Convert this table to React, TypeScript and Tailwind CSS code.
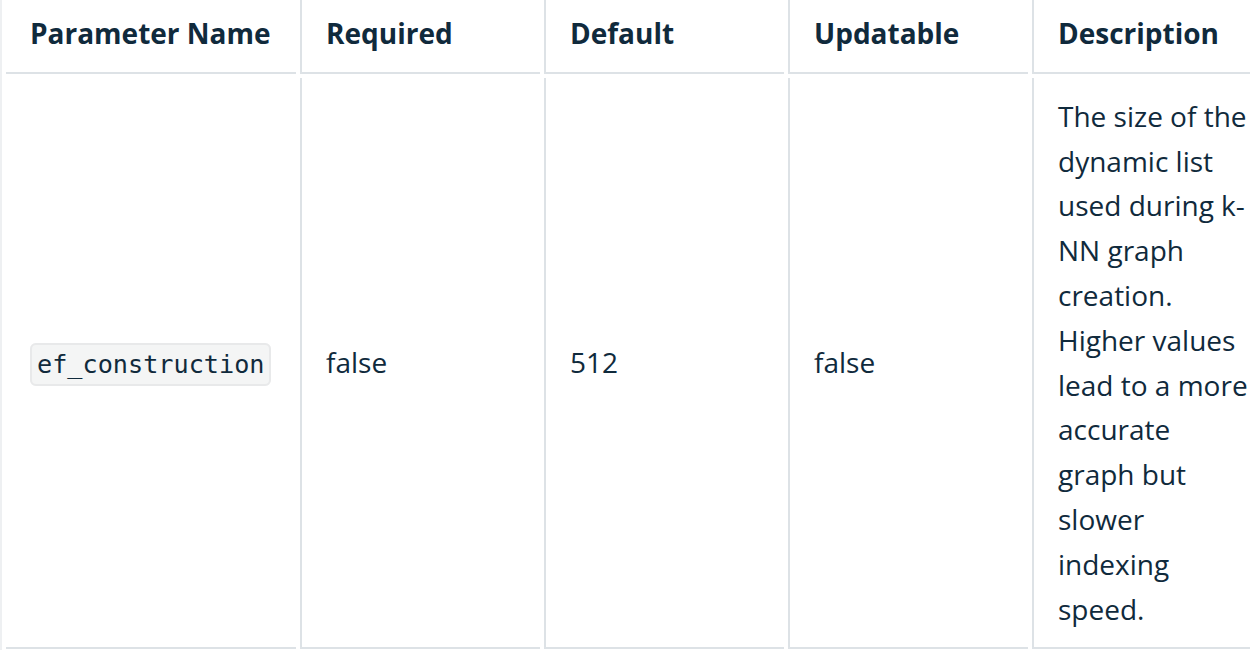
/**
 * Parameter reference table (single row, zoomed-in docs view).
 */

const headers = ['Parameter Name', 'Required', 'Default', 'Updatable', 'Description']

const row = {
  name: 'ef_construction',
  required: 'false',
  default: '512',
  updatable: 'false',
  description:
    'The size of the dynamic list used during k-NN graph creation. Higher values lead to a more accurate graph but slower indexing speed.',
}

const colWidth = ['w-[290px]', 'w-[240px]', 'w-[240px]', 'w-[240px]', 'w-[242px]']

function cellCls(idx: number) {
  return [
    'border-b-2 border-[#dde2e6] px-6 py-4 text-left align-middle',
    idx > 0 ? 'border-l-2' : '',
    colWidth[idx],
  ].join(' ')
}

export default function App() {
  return (
    <div
      className="h-[650px] w-[1250px] overflow-hidden border-l-2 border-[#eef0f2] bg-white text-[28px] leading-[1.6] text-[#102a3c]"
      style={{ fontFamily: '"Open Sans", "Noto Sans", sans-serif' }}
    >
      <table className="-mt-[9px] w-[1276px] table-fixed border-separate border-spacing-1">
        <thead>
          <tr>
            {headers.map((h, idx) => (
              <th key={h} className={cellCls(idx) + ' font-bold'}>
                {h}
              </th>
            ))}
          </tr>
        </thead>
        <tbody>
          <tr>
            <td className={cellCls(0)}>
              <code
                className="rounded-md border-2 border-[#e8e9ea] bg-[#f4f5f5] px-[5px] py-[5px] text-[25.2px]"
                style={{ fontFamily: '"DejaVu Sans Mono", "Liberation Mono", monospace' }}
              >
                {row.name}
              </code>
            </td>
            <td className={cellCls(1)}>{row.required}</td>
            <td className={cellCls(2)}>{row.default}</td>
            <td className={cellCls(3)}>{row.updatable}</td>
            <td className={cellCls(4)}>{row.description}</td>
          </tr>
        </tbody>
      </table>
    </div>
  )
}
